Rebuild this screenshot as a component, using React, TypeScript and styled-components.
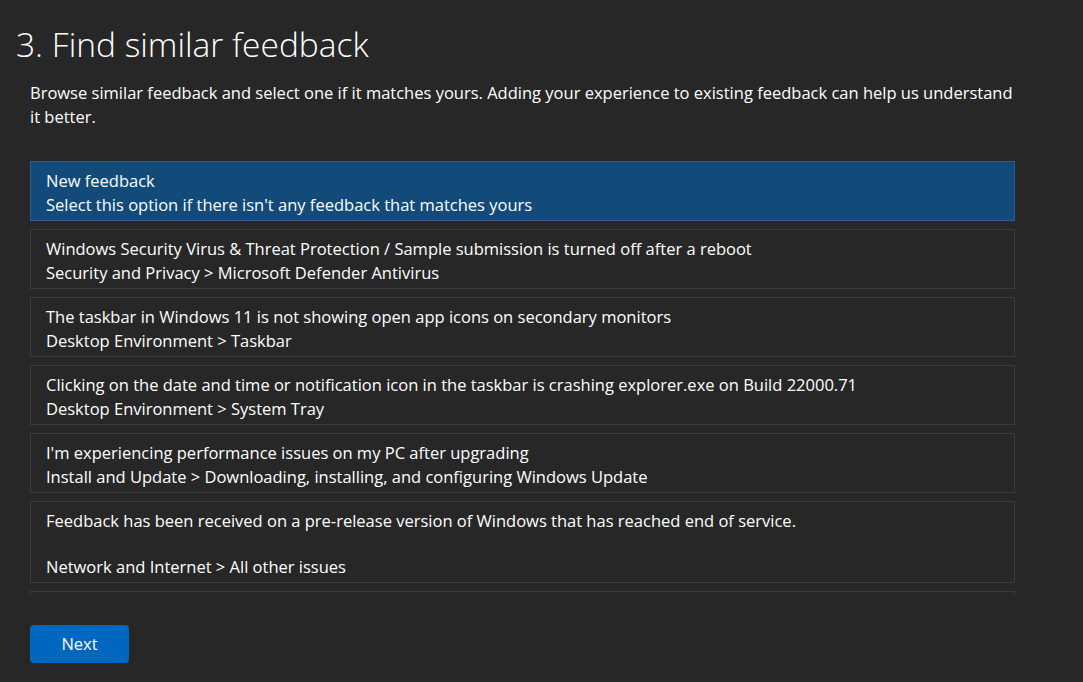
import React from "react";
import styled, { createGlobalStyle } from "styled-components";

const Global = createGlobalStyle`
  html, body { margin: 0; padding: 0; background: #272727; }
  body { font-family: "Open Sans", "Noto Sans", sans-serif; color: #ffffff; }
  * { box-sizing: border-box; }
`;

const Page = styled.div`
  width: 1083px;
  height: 682px;
  overflow: hidden;
  background: #272727;
  padding: 22px 68px 0 30px;
`;

const Title = styled.h1`
  margin: 0 0 0 -14px;
  font-size: 33.5px;
  font-weight: 300;
  line-height: 44px;
  color: #ffffff;
`;

const Description = styled.p`
  margin: 15px 0 0 0;
  font-size: 16.5px;
  line-height: 24px;
  color: #ffffff;
`;

const List = styled.div`
  margin-top: 32px;
  height: 434px;
  overflow: hidden;
  display: flex;
  flex-direction: column;
  gap: 8px;
`;

const Item = styled.div<{ $selected?: boolean }>`
  flex: none;
  border: 1px solid ${(p) => (p.$selected ? "#2c5e8c" : "#3c3c3c")};
  background: ${(p) => (p.$selected ? "#124a79" : "#272727")};
  padding: 7px 15px 3px;
  font-size: 16.5px;
  line-height: 24px;
  color: #ffffff;
`;

const Line = styled.div`
  white-space: nowrap;
`;

const Spacer = styled.div`
  height: 22px;
`;

const NextButton = styled.button`
  margin-top: 30px;
  width: 99px;
  height: 38px;
  border: none;
  border-radius: 4px;
  background: #0067c0;
  color: #ffffff;
  font-family: "Open Sans", "Noto Sans", sans-serif;
  font-size: 16.5px;
  line-height: 38px;
  padding: 0;
  cursor: pointer;
`;

const items: { title: string; sub: string; gap?: boolean }[] = [
  {
    title: "Windows Security Virus & Threat Protection / Sample submission is turned off after a reboot",
    sub: "Security and Privacy > Microsoft Defender Antivirus",
  },
  {
    title: "The taskbar in Windows 11 is not showing open app icons on secondary monitors",
    sub: "Desktop Environment > Taskbar",
  },
  {
    title: "Clicking on the date and time or notification icon in the taskbar is crashing explorer.exe on Build 22000.71",
    sub: "Desktop Environment > System Tray",
  },
  {
    title: "I'm experiencing performance issues on my PC after upgrading",
    sub: "Install and Update > Downloading, installing, and configuring Windows Update",
  },
  {
    title: "Feedback has been received on a pre-release version of Windows that has reached end of service.",
    sub: "Network and Internet > All other issues",
    gap: true,
  },
  {
    title: "Feedback has been received on a pre-release version of Windows that has reached end of service.",
    sub: "Network and Internet > All other issues",
    gap: true,
  },
];

export default function App() {
  return (
    <>
      <Global />
      <Page>
        <Title>3. Find similar feedback</Title>
        <Description>
          Browse similar feedback and select one if it matches yours. Adding your experience to existing feedback can help us understand it better.
        </Description>
        <List>
          <Item $selected>
            <Line>New feedback</Line>
            <Line>Select this option if there isn't any feedback that matches yours</Line>
          </Item>
          {items.map((it, i) => (
            <Item key={i}>
              <Line>{it.title}</Line>
              {it.gap && <Spacer />}
              <Line>{it.sub}</Line>
            </Item>
          ))}
        </List>
        <NextButton>Next</NextButton>
      </Page>
    </>
  );
}
